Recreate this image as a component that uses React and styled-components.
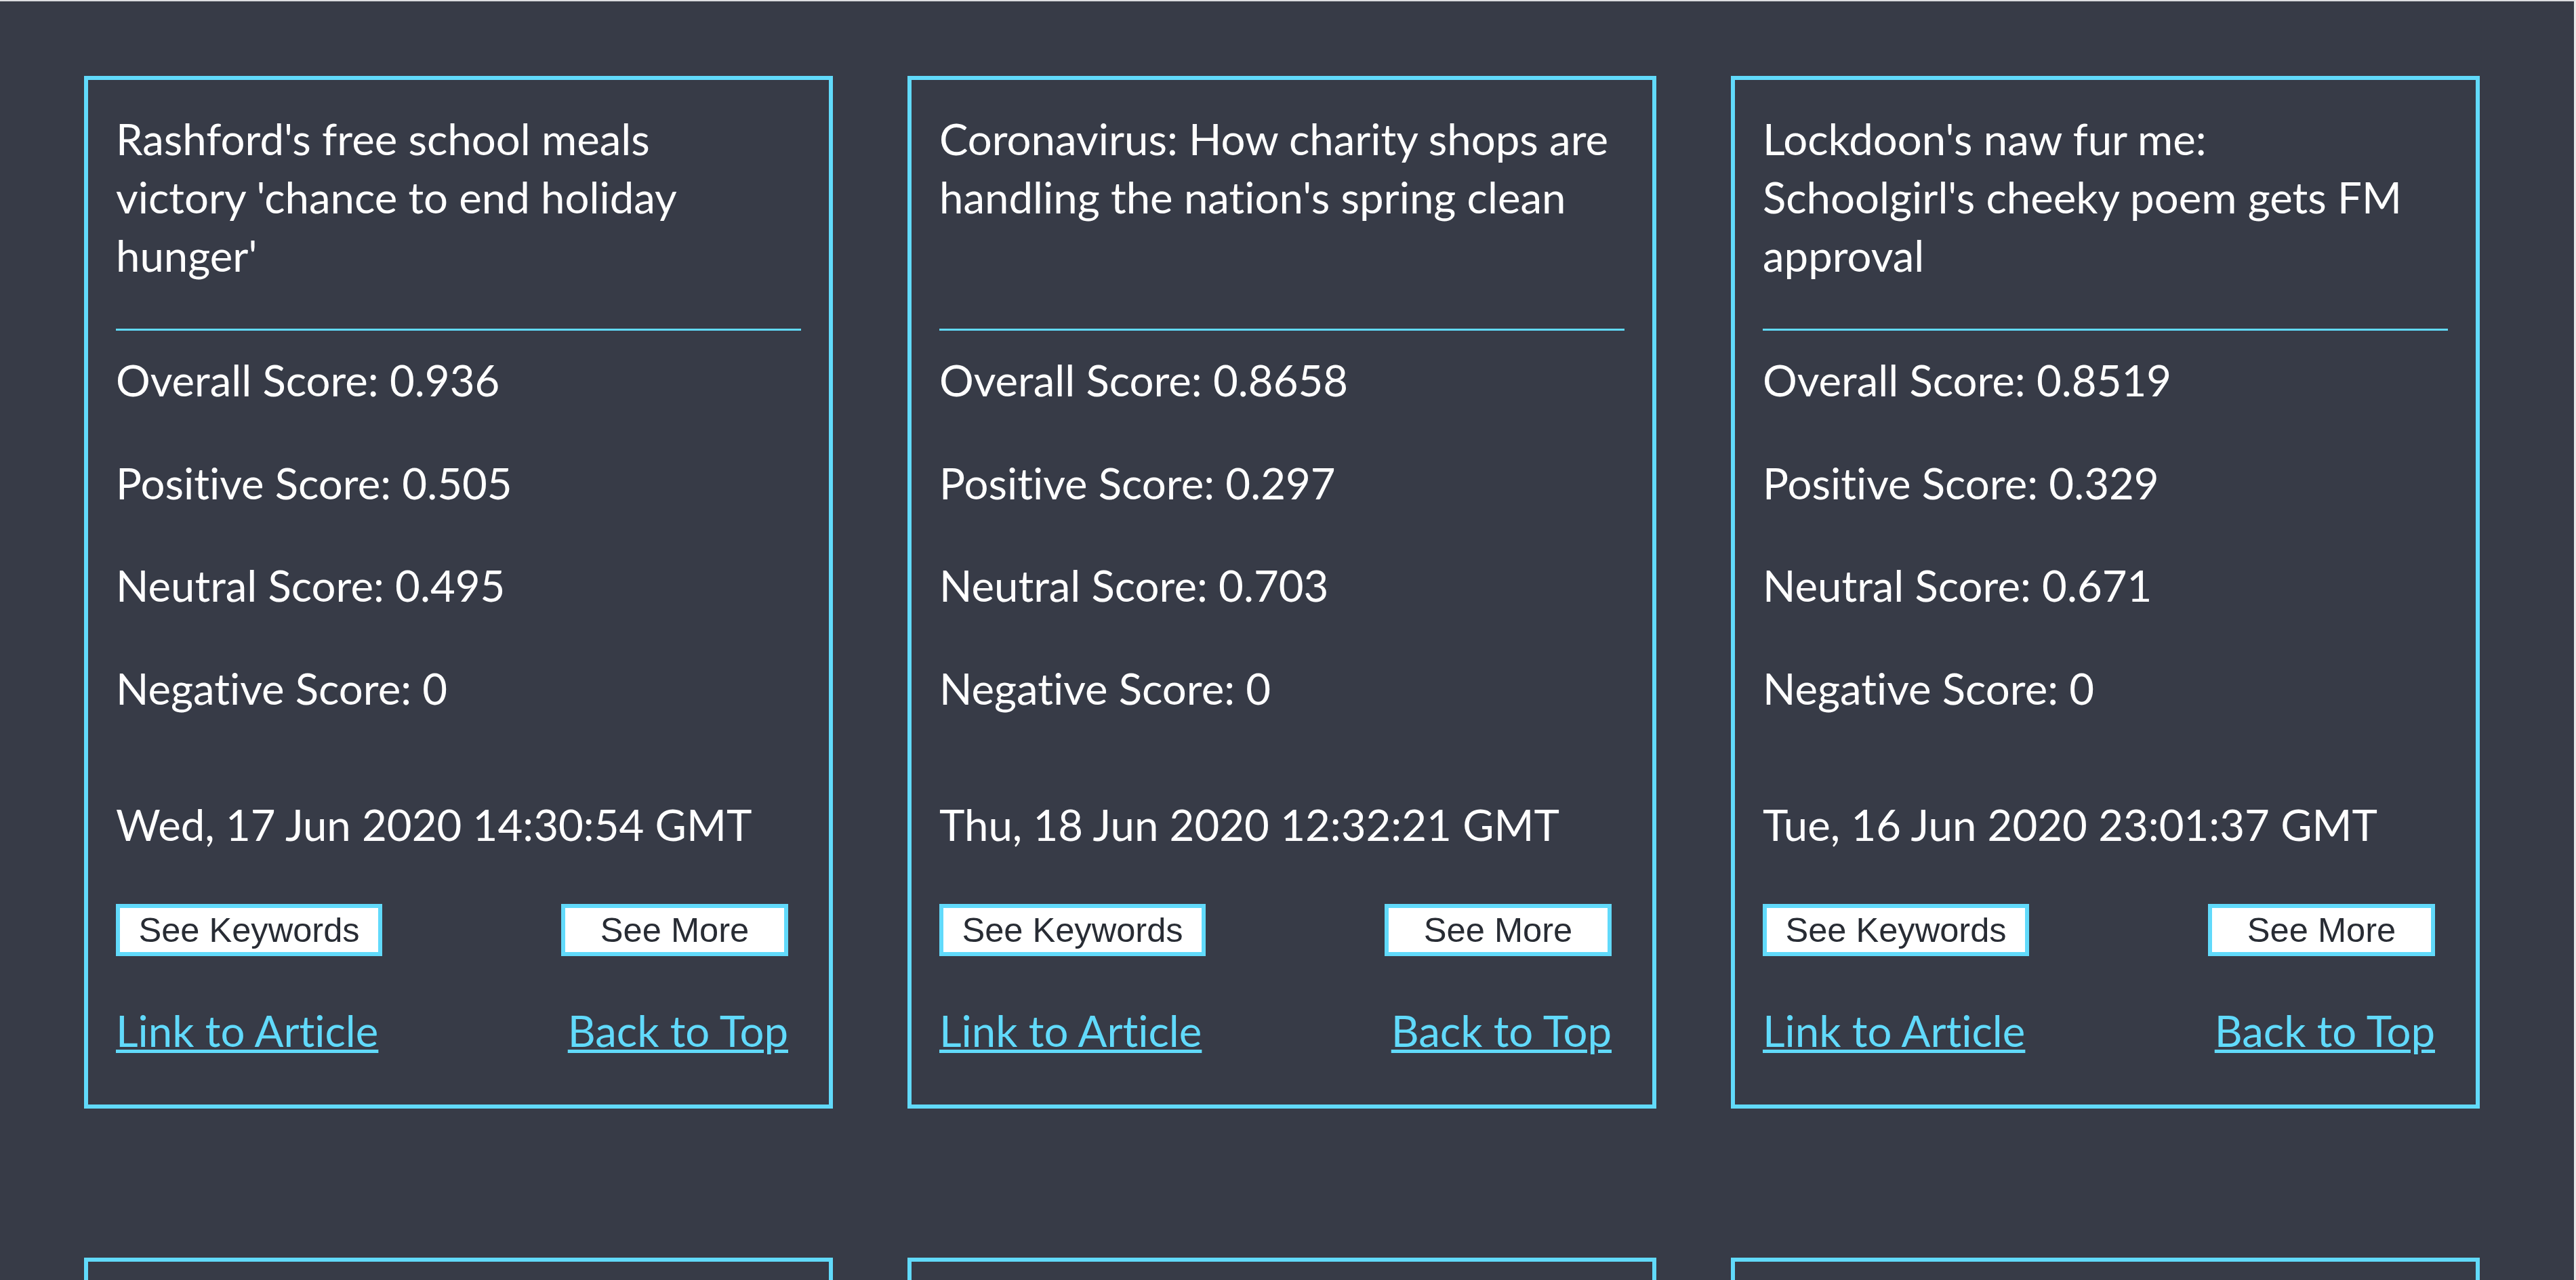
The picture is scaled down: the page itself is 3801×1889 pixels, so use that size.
import React from 'react';
import styled, { createGlobalStyle } from 'styled-components';

const articles = [
    {
        title: "Rashford's free school meals\nvictory 'chance to end holiday\nhunger'",
        overall: '0.936', positive: '0.505', neutral: '0.495', negative: '0',
        date: 'Wed, 17 Jun 2020 14:30:54 GMT'
    },
    {
        title: "Coronavirus: How charity shops are\nhandling the nation's spring clean",
        overall: '0.8658', positive: '0.297', neutral: '0.703', negative: '0',
        date: 'Thu, 18 Jun 2020 12:32:21 GMT'
    },
    {
        title: "Lockdoon's naw fur me:\nSchoolgirl's cheeky poem gets FM\napproval",
        overall: '0.8519', positive: '0.329', neutral: '0.671', negative: '0',
        date: 'Tue, 16 Jun 2020 23:01:37 GMT'
    },
    {
        title: "Coronavirus: Community groups\nrally to deliver food parcels",
        overall: '0.7003', positive: '0.214', neutral: '0.786', negative: '0',
        date: 'Tue, 16 Jun 2020 09:12:40 GMT'
    },
    {
        title: "Volunteers plant thousands of\ntrees in city parks",
        overall: '0.6808', positive: '0.198', neutral: '0.802', negative: '0',
        date: 'Mon, 15 Jun 2020 17:45:02 GMT'
    },
    {
        title: "Zoo welcomes back visitors\nafter lockdown",
        overall: '0.6249', positive: '0.176', neutral: '0.824', negative: '0',
        date: 'Mon, 15 Jun 2020 11:20:18 GMT'
    }
]

export default function App(){
    return (
        <>
            <GlobalStyle/>
            <Page>
                <Grid>
                    {articles.map((a, i) => (
                        <Card key={i}>
                            <Title>{a.title}</Title>
                            <Rule/>
                            <Stats>
                                <p>Overall Score: {a.overall}</p>
                                <p>Positive Score: {a.positive}</p>
                                <p>Neutral Score: {a.neutral}</p>
                                <p>Negative Score: {a.negative}</p>
                            </Stats>
                            <DateLine>{a.date}</DateLine>
                            <ButtonRow>
                                <Button $width={393}>See Keywords</Button>
                                <Button $width={335}>See More</Button>
                            </ButtonRow>
                            <LinkRow>
                                <a href="#article">Link to Article</a>
                                <a href="#top">Back to Top</a>
                            </LinkRow>
                        </Card>
                    ))}
                </Grid>
            </Page>
        </>
    )
}

const accent = '#61dafb',
    pagebg = '#373b47',
    buttontext = '#282c34'

const GlobalStyle = createGlobalStyle`
    html, body {
        margin: 0;
        padding: 0;
        background: ${pagebg};
        overflow: hidden;
    }
    body {
        font-family: Lato, "Noto Sans", sans-serif;
        font-variant-ligatures: no-common-ligatures;
    }
`

const Page = styled.main`
    box-sizing: border-box;
    height: 100vh;
    border-top: 2px solid #dcdde0;
    border-right: 3px solid #e8e8e8;
    padding: 110px 0 0 124px;
    background: ${pagebg};
    overflow: hidden;
`

const Grid = styled.section`
    display: grid;
    grid-template-columns: repeat(3, 1105px);
    column-gap: 110px;
    row-gap: 220px;
`

const Card = styled.article`
    box-sizing: border-box;
    display: flex;
    flex-direction: column;
    border: 6px solid ${accent};
    padding: 44px 41px 66px;
    color: #ffffff;
    font-size: 63.5px;
    line-height: 86px;
`

const Title = styled.h2`
    margin: 0;
    font: inherit;
    min-height: 258px;
    white-space: pre;
`

const Rule = styled.hr`
    margin: 64.5px 0 30.5px;
    border: 0;
    height: 3px;
    background: ${accent};
`

const Stats = styled.div`
    display: flex;
    flex-direction: column;
    gap: 65.5px;

    p{
        margin: 0;
    }
`

const DateLine = styled.p`
    margin: 115px 0 0;
`

const ButtonRow = styled.div`
    display: flex;
    justify-content: space-between;
    margin-top: 74.5px;
    padding-right: 19px;
`

const Button = styled.button`
    box-sizing: border-box;
    width: ${p => p.$width}px;
    height: 77px;
    padding: 0;
    border: 6px solid ${accent};
    border-radius: 0;
    background: #ffffff;
    color: ${buttontext};
    font-family: "Liberation Sans", Arial, sans-serif;
    font-size: 50.6px;
    cursor: pointer;
`

const LinkRow = styled.div`
    display: flex;
    justify-content: space-between;
    margin-top: 67px;
    padding-right: 19px;

    a{
        color: ${accent};
        text-decoration: underline;
        text-decoration-thickness: 5px;
        text-underline-offset: 4px;
    }
`
